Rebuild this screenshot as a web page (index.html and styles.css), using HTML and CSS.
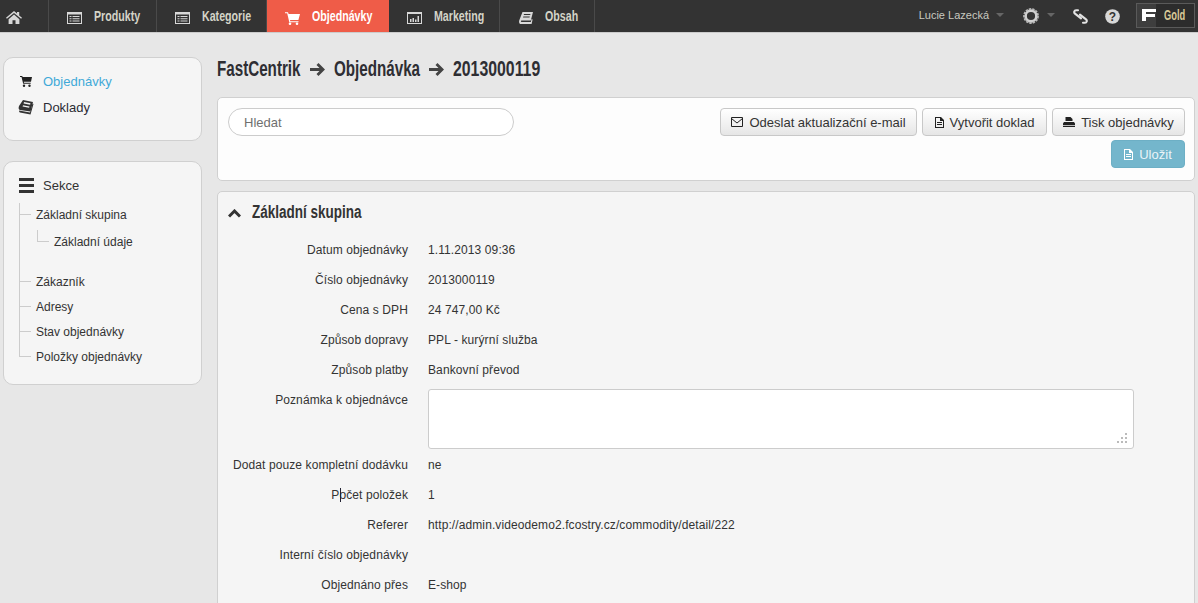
FILE: index.html
```html
<!DOCTYPE html>
<html lang="cs">
<head>
<meta charset="utf-8">
<title>Objednávka</title>
<link rel="stylesheet" href="styles.css">
</head>
<body>
<header class="topbar">
  <nav class="mainnav">
    <a class="nav-home"><svg width="16" height="13" viewBox="0 0 16 13"><path class="ic-fill" d="M8 0 0 6.800l.9 1L8 1.900l7.100 5.900.9-1L13.200 4.400V1H11v1.500zM2.600 8.200V13h3.900V9.300h3V13h3.900V8.200L8 3.600z"/></svg></a>
    <a class="nav-item nav-w1"><svg class="nav-ic" width="15" height="12" viewBox="0 0 15 12"><path class="ic-fill" fill-rule="evenodd" d="M0 0h15v12H0zM1 2.500V11h13V2.500zM2.500 4h2v1h-2zM5.500 4h7v1h-7zM2.500 6.200h2v1h-2zM5.500 6.200h7v1h-7zM2.500 8.500h2v1h-2zM5.500 8.500h7v1h-7z"/></svg><span class="cond">Produkty</span></a>
    <a class="nav-item nav-w2"><svg class="nav-ic" width="15" height="12" viewBox="0 0 15 12"><path class="ic-fill" fill-rule="evenodd" d="M0 0h15v12H0zM1 2.500V11h13V2.500zM2.500 4h2v1h-2zM5.500 4h7v1h-7zM2.500 6.200h2v1h-2zM5.500 6.200h7v1h-7zM2.500 8.500h2v1h-2zM5.500 8.500h7v1h-7z"/></svg><span class="cond">Kategorie</span></a>
    <a class="nav-item nav-w3 is-active"><svg class="nav-ic" width="15" height="13" viewBox="0 0 15 13"><path fill="#fff" d="M0 .2h3l.6 1.800H15l-1.600 6H5l.3 1.300h8.200v1H4.300L2.200 1.300H0z"/><circle fill="#fff" cx="5" cy="11.700" r="1.300"/><circle fill="#fff" cx="12" cy="11.700" r="1.300"/></svg><span class="cond">Objednávky</span></a>
    <a class="nav-item nav-w4"><svg class="nav-ic" width="15" height="12" viewBox="0 0 15 12"><path class="ic-fill" fill-rule="evenodd" d="M0 0h15v12H0zM1 2V11h13V2zM3 7h1.500v3H3zM5.500 6H7v4H5.500zM8 7.500h1.500V10H8zM10.500 4H12v6h-1.500z"/></svg><span class="cond">Marketing</span></a>
    <a class="nav-item nav-w5"><svg class="nav-ic" width="14" height="12" viewBox="0 0 14 12"><path class="ic-fill" d="M3.500 0H14l-2.200 8.500H2.500C1.800 8.500 1.600 10 2.500 10h9.300l.8-3 1 .4-1 4.600H2C.4 12-.3 10.500.2 8.500zM5 2l-.3 1h6.500l.3-1zM4.300 4.500l-.3 1h6.500l.3-1z"/></svg><span class="cond">Obsah</span></a>
  </nav>
  <div class="usernav">
    <span class="username">Lucie Lazecká</span><i class="caret caret-user"></i>
    <svg class="gear" width="16" height="16" viewBox="0 0 16 16"><circle cx="8" cy="8" r="5.400" fill="none" stroke="#d0d0d0" stroke-width="2.600"/><circle cx="8" cy="8" r="7" fill="none" stroke="#b8b8b8" stroke-width="1.800" stroke-dasharray="2.400 1.000"/></svg><i class="caret caret-gear"></i>
    <svg class="link-ic" width="15" height="15" viewBox="0 0 15 15"><path fill="none" stroke="#e2e2e2" stroke-width="2.100" stroke-linecap="round" d="M5 1.200H3C1.200 1.200.6 3.500 2 4.700L8 9.300M10 13.800h2c1.800 0 2.400-2.300 1-3.500L7 5.700"/></svg>
    <svg class="help-ic" width="15" height="15" viewBox="0 0 15 15"><circle class="ic-fill" cx="7.500" cy="7.500" r="7.300"/><text class="help-q" x="7.500" y="11.500" text-anchor="middle">?</text></svg>
    <div class="plan"><span class="plan-f"><svg width="14" height="12" viewBox="0 0 14 12"><path fill="#fff" d="M0 0h14v3H4v2h9v3H4v4H0z"/></svg></span><span class="plan-name"><span class="cond cond-gold">Gold</span></span></div>
  </div>
</header>

<div class="layout">
  <aside class="sidebar">
    <div class="sidecard card-top">
      <a class="side-link is-current"><svg class="side-ic" width="12" height="11" viewBox="0 0 12 11"><path fill="#222" d="M0 0h2.300l.3 1H12l-1 4.800H3.800l.2 1h6.700v1H3.200L1.500 1H0z"/><circle fill="#222" cx="4" cy="9.700" r="1.200"/><circle fill="#222" cx="9.500" cy="9.700" r="1.200"/></svg>Objednávky</a>
      <a class="side-link"><svg class="side-ic" width="16" height="16" viewBox="0 0 16 16"><path fill="#333" d="M5 1 15 3l-2.500 9.500L2 11C.5 10.500.3 9 1 7zM6 3 5.600 4.500l6.500 1.300.4-1.500zM5 6.200 4.600 7.500l6.500 1.300.4-1.400z"/><path fill="#333" d="M1 11.500l11 2 2.500-9 1 .5-3 10.500L2 13.500c-.7-.3-1-1.200-1-2z"/></svg>Doklady</a>
    </div>
    <div class="sidecard card-sec">
      <div class="sec-head"><span class="burger"><i></i><i></i><i></i></span>Sekce</div>
      <ul class="tree">
        <li class="tree-l tree-first">Základní skupina
          <ul class="subtree"><li>Základní údaje</li></ul>
        </li>
        <li class="tree-l">Zákazník</li>
        <li class="tree-l">Adresy</li>
        <li class="tree-l">Stav objednávky</li>
        <li class="tree-l tree-last">Položky objednávky</li>
      </ul>
    </div>
  </aside>

  <main class="content">
    <h1 class="crumbs"><span class="crumb crumb-a"><span class="cond">FastCentrik</span></span><svg class="arrow" width="15" height="13" viewBox="0 0 15 13"><path fill="#444" d="M8.500 0 15 6.500 8.500 13 6.500 11l3-3H0V5h9.500l-3-3z"/></svg><span class="crumb crumb-b"><span class="cond">Objednávka</span></span><svg class="arrow" width="15" height="13" viewBox="0 0 15 13"><path fill="#444" d="M8.500 0 15 6.500 8.500 13 6.500 11l3-3H0V5h9.500l-3-3z"/></svg><span class="crumb crumb-c"><span class="cond cond-num">2013000119</span></span></h1>

    <section class="toolbar">
      <input class="search" type="text" placeholder="Hledat">
      <div class="actions">
        <div class="action-row">
          <button class="btn btn-o"><svg class="btn-ic" width="12" height="10" viewBox="0 0 12 10"><path fill="none" stroke="#222" d="M.5.500h11v9H.5zM.5 1.500 6 6l5.500-4.500"/></svg>Odeslat aktualizační e-mail</button>
          <button class="btn btn-v"><svg class="btn-ic" width="9" height="11" viewBox="0 0 9 11"><path fill="#222" fill-rule="evenodd" d="M0 0h6l3 3v8H0zM1 1v9h7V4H5V1zM2 5h5v1H2zM2 7h5v1H2z"/></svg>Vytvořit doklad</button>
          <button class="btn btn-t"><svg class="btn-ic" width="12" height="10" viewBox="0 0 12 10"><path fill="#222" d="M2.500 0h5L9.500 2v2h-7zM1 5h10l1 1.500V8H0V6.500zM0 8.800h12V10H0z"/></svg>Tisk objednávky</button>
        </div>
        <button class="btn btn-save"><svg class="btn-ic" width="9" height="11" viewBox="0 0 9 11"><path fill="#fff" fill-rule="evenodd" d="M0 0h6l3 3v8H0zM1 1v9h7V4H5V1zM2 5h5v1H2zM2 7h5v1H2z"/></svg>Uložit</button>
      </div>
    </section>

    <section class="panel">
      <h2 class="panel-title"><svg class="chev" width="13" height="9" viewBox="0 0 13 9"><path fill="none" stroke="#333" stroke-width="3" d="M1 7.500l5.500-5.500L12 7.500"/></svg><span class="cond cond-title">Základní skupina</span></h2>
      <div class="form">
        <div class="row"><span class="lbl">Datum objednávky</span><span class="val">1.11.2013 09:36</span></div>
        <div class="row"><span class="lbl">Číslo objednávky</span><span class="val">2013000119</span></div>
        <div class="row"><span class="lbl">Cena s DPH</span><span class="val">24 747,00 Kč</span></div>
        <div class="row"><span class="lbl">Způsob dopravy</span><span class="val">PPL - kurýrní služba</span></div>
        <div class="row"><span class="lbl">Způsob platby</span><span class="val">Bankovní převod</span></div>
        <div class="row row-area"><span class="lbl">Poznámka k objednávce</span><div class="note"><svg class="grip" width="12" height="12" viewBox="0 0 12 12"><path fill="#bbb" d="M9 1h2v2H9zM5 5h2v2H5zM9 5h2v2H9zM1 9h2v2H1zM5 9h2v2H5zM9 9h2v2H9z"/></svg></div></div>
        <div class="row"><span class="lbl">Dodat pouze kompletní dodávku</span><span class="val">ne</span></div>
        <div class="row"><span class="lbl">Počet položek<i class="cursor"></i></span><span class="val">1</span></div>
        <div class="row"><span class="lbl">Referer</span><span class="val">http://admin.videodemo2.fcostry.cz/commodity/detail/222</span></div>
        <div class="row"><span class="lbl">Interní číslo objednávky</span><span class="val"></span></div>
        <div class="row"><span class="lbl">Objednáno přes</span><span class="val">E-shop</span></div>
      </div>
    </section>
  </main>
</div>
</body>
</html>
```

FILE: styles.css
```css
* { box-sizing: border-box; }
html, body { margin: 0; height: 603px; overflow: hidden; }
body { background: #e7e7e7; font-family: "Liberation Sans", Arial, sans-serif; font-size: 12px; color: #333; }
.ic-fill { fill: #d8d8d8; }

.cond { display: inline-block; flex: none; white-space: nowrap; font-family: "Liberation Sans", Arial, sans-serif; font-weight: 700; transform: scaleX(.71); transform-origin: left center; }

.topbar { height: 33px; background: #333; border-bottom: 1px solid #ccc; display: flex; justify-content: space-between; }
.mainnav { display: flex; height: 32px; }
.nav-home { width: 49px; height: 32px; border-right: 1px solid #4a4a4a; padding: 11px 0 0 6px; }
.nav-item { height: 32px; display: flex; align-items: flex-start; border-right: 1px solid #4a4a4a; color: #d4d4c8; font-size: 15px; line-height: 17px; padding-top: 7px; overflow: hidden; }
.nav-ic { margin-right: 12px; margin-top: 5px; flex: none; }
.nav-w1 { width: 108px; padding-left: 18px; }
.nav-w2 { width: 110px; padding-left: 18px; }
.nav-w3 { width: 122px; padding-left: 18px; }
.nav-w4 { width: 111px; padding-left: 18px; }
.nav-w5 { width: 95px; padding-left: 19px; }
.nav-item.is-active { background: #ef5c48; color: #fff; border-right: 0; }

.usernav { display: flex; align-items: center; height: 32px; padding-right: 3px; }
.username { color: #c9c9c0; font-size: 11px; margin-bottom: 2px; }
.caret { display: block; width: 0; height: 0; border: 4px solid transparent; border-top: 4px solid #666; border-bottom: 0; margin-bottom: 3px; }
.caret-user { margin-left: 7px; margin-right: 19px; }
.gear { margin-right: 8px; }
.caret-gear { margin-right: 18px; }
.link-ic { margin-right: 17px; }
.help-ic { margin-right: 16px; }
.help-q { font: 700 12px "Liberation Sans", sans-serif; fill: #333; }
.plan { width: 59px; height: 25px; border: 1px solid #5a5a5a; display: flex; background: #2c2c2c; margin-bottom: 2px; }
.plan-f { width: 23px; background: #3e3e3e; padding: 5px 0 0 5px; }
.plan-name { flex: 1; padding-left: 8px; color: #d8c998; font-size: 15px; line-height: 22px; }
.cond-gold { transform: scaleX(.62); }

.layout { display: flex; align-items: flex-start; padding: 24px 3px 0; }
.sidebar { width: 199px; flex: none; margin-right: 15px; }
.sidecard { background: #f5f5f5; border: 1px solid #d0d0d0; border-radius: 10px; }
.card-top { height: 84px; padding: 10px 0 0 14px; margin-bottom: 20px; }
.side-link { display: flex; align-items: center; height: 26px; font-size: 13px; color: #2b2b33; }
.side-link.is-current { color: #3fa9d8; }
.side-ic { width: 16px; margin-right: 9px; flex: none; }
.card-sec { height: 224px; padding: 14px 0 0 15px; }
.sec-head { display: flex; align-items: center; height: 18px; font-size: 13px; margin-bottom: 9px; }
.burger { display: flex; flex-direction: column; gap: 3px; width: 15px; margin-right: 9px; }
.burger i { display: block; height: 3px; background: #333; }
.tree { list-style: none; margin: 0; padding: 0; }
.tree-l { position: relative; padding-left: 16px; height: 25px; line-height: 25px; border-left: 1px solid #ccc; }
.tree-l::before { content: ""; position: absolute; left: 0; top: 11px; width: 11px; height: 1px; background: #ccc; }
.tree-first { height: 67px; line-height: 24px; }
.tree-last { height: 12px; }
.subtree { list-style: none; margin: 2px 0 0; padding: 0 0 0 18px; position: relative; line-height: 27px; }
.subtree li::before { content: ""; position: absolute; left: 1px; top: 1px; width: 11px; height: 11px; border-left: 1px solid #ccc; border-bottom: 1px solid #ccc; }

.content { flex: 1; min-width: 0; }
.crumbs { margin: 0; height: 40px; display: flex; align-items: flex-start; gap: 9px; font-size: 22px; line-height: 23px; color: #2e2e33; }
.crumb { display: block; }
.crumb-a { width: 84px; }
.crumb-b { width: 86px; }
.crumb-c { width: 88px; }
.crumbs .cond { transform: scaleX(.69); }
.crumbs .cond-num { transform: scaleX(.72); }
.arrow { margin-top: 6px; flex: none; }
.toolbar { height: 84px; background: #fdfdfd; border: 1px solid #d0d0d0; border-radius: 5px; display: flex; justify-content: space-between; padding: 10px 9px 0 10px; }
.search { width: 286px; height: 28px; border: 1px solid #ccc; border-radius: 14px; padding: 0 15px; font: 13px "Liberation Sans", sans-serif; background: #fff; color: #333; }
.search::placeholder { color: #6f6f6f; opacity: 1; }
.actions { display: flex; flex-direction: column; align-items: flex-end; gap: 4px; }
.action-row { display: flex; gap: 5px; }
.btn { height: 28px; display: flex; align-items: center; justify-content: center; border: 1px solid #c8c8c8; border-radius: 4px; background: linear-gradient(#ffffff, #e6e6e6); font: 13px "Liberation Sans", sans-serif; color: #333; padding: 0; white-space: nowrap; }
.btn-o { width: 197px; }
.btn-v { width: 125px; }
.btn-t { width: 133px; }
.btn-ic { margin-right: 6px; flex: none; }
.btn-save { width: 74px; background: #74b6cc; border-color: #6dafc5; color: #eaf4f7; }
.panel { margin-top: 10px; height: 430px; background: #f5f5f5; border: 1px solid #d0d0d0; border-radius: 5px; }
.panel-title { margin: 0; height: 40px; display: flex; align-items: center; font-size: 18px; font-weight: 700; color: #333; padding-left: 10px; }
.chev { margin-right: 11px; margin-top: 2px; flex: none; }
.cond-title { transform: scaleX(.75); }
.form { padding-top: 3px; letter-spacing: .1px; }
.row { display: flex; height: 30px; line-height: 30px; }
.row-area { height: 65px; }
.lbl { width: 190px; text-align: right; margin-right: 20px; flex: none; white-space: nowrap; position: relative; }
.val { white-space: nowrap; }
.note { position: relative; width: 706px; height: 60px; margin-top: 4px; background: #fff; border: 1px solid #ccc; border-radius: 3px; }
.grip { position: absolute; right: 5px; bottom: 4px; }
.cursor { position: absolute; left: 122px; top: 8px; width: 1px; height: 14px; background: #223; }
```
